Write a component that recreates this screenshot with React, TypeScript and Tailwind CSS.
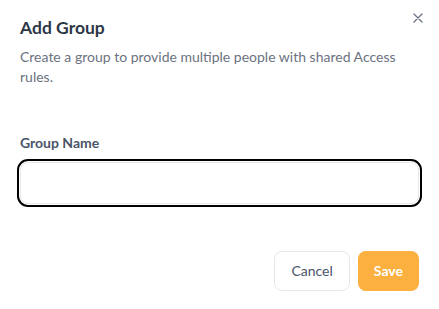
import React from "react";

export default function App() {
  return (
    <div
      className="w-[439px] h-[309px] bg-white relative px-5 pt-[14px]"
      style={{ fontFamily: "Lato, 'Open Sans', sans-serif" }}
    >
      <button className="absolute right-[15px] top-[12px] w-[12px] h-[12px] flex items-center justify-center text-gray-500">
        <svg width="10" height="10" viewBox="0 0 10 10" fill="none">
          <path d="M1 1L9 9M9 1L1 9" stroke="#6b7280" strokeWidth="1.3" strokeLinecap="round" />
        </svg>
      </button>
      <h2 className="text-[17.5px] leading-7 font-bold text-[#2d3748]">Add Group</h2>
      <p className="mt-[5px] text-sm leading-5 text-[#6b7280]">
        Create a group to provide multiple people with shared Access rules.
      </p>
      <div className="mt-[46px] flex flex-col">
        <label className="text-sm leading-5 font-bold text-[#4a5568]">Group Name</label>
        <input
          className="mt-[9px] h-[42px] w-full rounded-lg border border-gray-200 bg-white px-3 text-sm outline-2 outline-black outline-offset-1"
        />
      </div>
      <div className="mt-[47px] flex justify-end gap-2">
        <button className="h-10 px-4 rounded-lg border border-gray-200 bg-white text-sm text-[#4a5568]">
          Cancel
        </button>
        <button className="h-10 px-4 rounded-lg bg-[#fbb040] text-sm font-bold text-white">
          Save
        </button>
      </div>
    </div>
  );
}
